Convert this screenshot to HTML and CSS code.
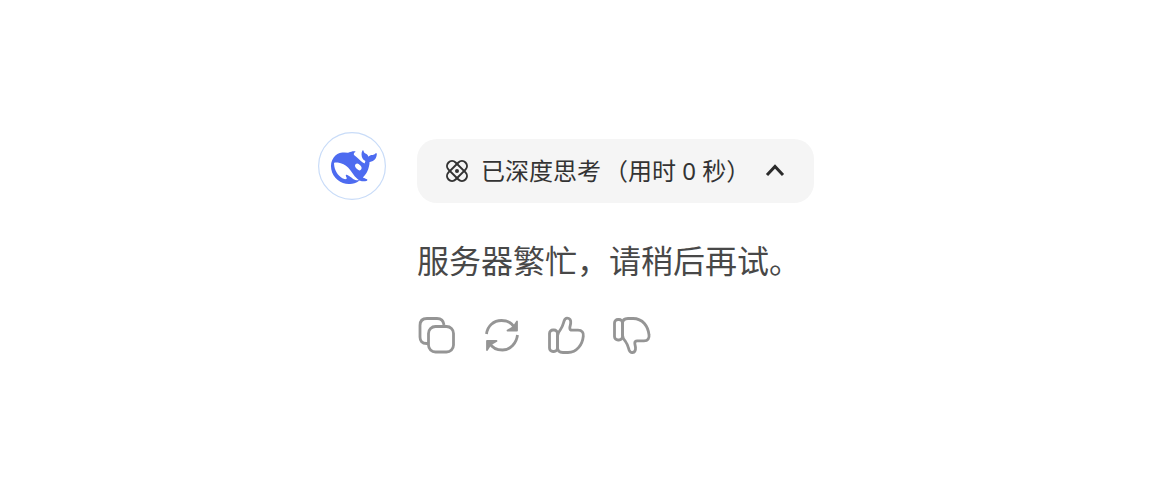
FILE: index.html
```html
<!DOCTYPE html>
<html lang="zh-CN">
<head>
<meta charset="utf-8">
<meta name="viewport" content="width=device-width, initial-scale=1">
<title>对话</title>
<link rel="stylesheet" href="styles.css">
</head>
<body>
<main class="chat">
  <article class="message">
    <svg class="avatar" viewBox="0 0 68 68" role="img" aria-label="DeepSeek">
      <circle cx="34" cy="34" r="33.4" fill="#fff" stroke="#c9dcf8" stroke-width="1.2"/>
      <g transform="translate(13 12.6) scale(1.91)" fill="#4d6bf0">
        <path d="M23.748 4.482c-.254-.124-.364.113-.512.234-.051.039-.094.09-.137.136-.372.397-.806.657-1.373.626-.829-.046-1.537.214-2.163.848-.133-.782-.575-1.248-1.247-1.548-.352-.156-.708-.311-.955-.65-.172-.241-.219-.51-.305-.774-.055-.16-.11-.323-.293-.35-.2-.031-.278.136-.356.276-.313.572-.434 1.202-.422 1.84.027 1.436.633 2.58 1.838 3.393.137.093.172.187.129.323-.082.28-.18.552-.266.833-.055.179-.137.217-.329.14a5.526 5.526 0 01-1.736-1.18c-.857-.828-1.631-1.742-2.597-2.458a11.365 11.365 0 00-.689-.471c-.985-.957.13-1.743.388-1.836.27-.098.093-.432-.779-.428-.872.004-1.67.295-2.687.684a3.055 3.055 0 01-.465.137 9.597 9.597 0 00-2.883-.102c-1.885.21-3.39 1.102-4.497 2.623C.082 8.606-.231 10.684.152 12.85c.403 2.284 1.569 4.175 3.36 5.653 1.858 1.533 3.997 2.284 6.438 2.14 1.482-.085 3.133-.284 4.994-1.86.47.234.962.327 1.78.397.63.059 1.236-.03 1.705-.128.735-.156.684-.837.419-.961-2.155-1.004-1.682-.595-2.113-.926 1.096-1.296 2.746-2.642 3.392-7.003.05-.347.007-.565 0-.845-.004-.17.035-.237.23-.256a4.173 4.173 0 001.545-.475c1.396-.763 1.96-2.015 2.093-3.517.02-.23-.004-.467-.247-.588zM11.581 18c-2.089-1.642-3.102-2.183-3.52-2.16-.392.024-.321.471-.235.763.09.288.207.486.371.739.114.167.192.416-.113.603-.673.416-1.842-.14-1.897-.167-1.361-.802-2.5-1.86-3.301-3.307-.774-1.393-1.224-2.887-1.298-4.482-.02-.386.093-.522.477-.592a4.696 4.696 0 011.529-.039c2.132.312 3.946 1.265 5.468 2.774.868.86 1.525 1.887 2.202 2.891.72 1.066 1.494 2.082 2.48 2.914.348.292.625.514.891.677-.802.09-2.14.11-3.054-.614z"/>
        <ellipse cx="14.300" cy="11.700" rx="2" ry="1.300" transform="rotate(48 14.300 11.700)" fill="#fff"/>
      </g>
    </svg>
    <div class="content">
      <button class="thinking" type="button" aria-expanded="true">
        <svg class="atom" viewBox="0 0 22 22" fill="none" stroke="#333" stroke-width="2" aria-hidden="true">
          <rect x="-1" y="6" width="24" height="10" rx="5" transform="rotate(45 11 11)"/>
          <rect x="-1" y="6" width="24" height="10" rx="5" transform="rotate(-45 11 11)"/>
          <circle cx="11" cy="11" r="2" fill="#333" stroke="none"/>
        </svg>
        <span class="label"><span>已深度思考</span><span>（用时 0 秒）</span></span>
        <svg class="chevron" viewBox="0 0 20 20" fill="none" stroke="#2b2b2b" stroke-width="3" aria-hidden="true">
          <path d="M2 14l8-8.500 8 8.500"/>
        </svg>
      </button>
      <p class="answer">服务器繁忙，请稍后再试。</p>
      <div class="actions">
        <button class="action" type="button" aria-label="复制">
          <svg class="icon" viewBox="0 0 40 40" aria-hidden="true">
            <path d="M11 27.500H9.500C5 27.500 3 25 3 21V9.500C3 5 5.500 2.500 10 2.500h10c4 0 6.500 2 7 6.500"/>
            <rect x="11.500" y="10.500" width="25" height="25.500" rx="7"/>
          </svg>
        </button>
        <button class="action" type="button" aria-label="重新生成">
          <svg class="icon" viewBox="0 0 40 40" aria-hidden="true">
            <path d="M4.500 18C5.500 10 11.500 4.500 19.500 4.500c6 0 10.500 2.500 13 7"/>
            <path d="M35 5.500v9H25.500L31.500 11z" fill="currentColor" stroke-width="1.800"/>
            <path d="M35.500 19c-1 8-7 15-15 15-6 0-10.500-2.500-13-7"/>
            <path d="M5 34v-9h9.500L8.500 28.500z" fill="currentColor" stroke-width="1.800"/>
          </svg>
        </button>
        <button class="action" type="button" aria-label="赞">
          <svg class="icon" viewBox="0 0 40 40" aria-hidden="true">
            <rect x="2.500" y="14" width="8" height="21.500" rx="3.500"/>
            <path d="M10.500 20c0-3 1.300-4.500 3-6.500 2-2.500 2.600-5.500 3.600-8.500.8-2.200 2-3 3.400-2.800 2.500.3 3.500 2.300 3.200 5-.2 2-.9 3-.9 4.700 0 1.600.9 2.300 2.400 2.300H31c4 0 5.800 2.600 5.300 6C35.500 28.500 30 36.500 21 36.500h-5c-3.500 0-5.500-1.500-5.500-5z"/>
          </svg>
        </button>
        <button class="action" type="button" aria-label="踩">
          <svg class="icon" viewBox="0 0 40 40" aria-hidden="true">
            <rect x="2.500" y="3.500" width="8" height="20.500" rx="3.500"/>
            <path d="M10.500 19c0 3 1.300 4.500 3 6.500 2 2.500 2.600 5.500 3.600 8.500.8 2 2 2.700 3.400 2.500 2.500-.3 3.200-2.300 3-5-.2-2-.7-3-.7-4.400 0-1.600.9-2.300 2.400-2.300H32c4 0 5.500-2.600 5-6C36 10.500 31 2.500 21 2.500h-5c-3.500 0-5.500 1.500-5.500 5z"/>
          </svg>
        </button>
      </div>
    </div>
  </article>
</main>
</body>
</html>
```
FILE: styles.css
```css
* {
  box-sizing: border-box;
}

body {
  margin: 0;
  background: #fff;
  color: #484848;
  font-family: "Noto Sans", "Noto Sans CJK SC", sans-serif;
}

.chat {
  max-width: 566px;
  margin: 0 auto;
  padding: 132px 16px 32px;
}

.message {
  display: flex;
  align-items: flex-start;
  gap: 31px;
}

.avatar {
  flex: none;
  width: 68px;
  height: 68px;
}

.content {
  flex: 1;
  min-width: 0;
  padding-top: 7px;
}

.thinking {
  display: inline-flex;
  align-items: center;
  min-height: 64px;
  padding: 0 29px;
  border: 0;
  border-radius: 20px;
  background: #f5f5f5;
  color: #333;
  font: inherit;
  font-size: 24px;
  line-height: 36px;
  cursor: pointer;
}

.atom {
  flex: none;
  width: 22px;
  height: 22px;
  margin-right: 13px;
}

.label {
  display: flex;
  gap: 3px;
}

.chevron {
  flex: none;
  width: 20px;
  height: 20px;
  margin-left: 15px;
}

.answer {
  margin: 34px 0 31px;
  font-size: 32px;
  line-height: 48px;
}

.actions {
  display: flex;
  gap: 25px;
}

.action {
  display: flex;
  padding: 0;
  border: 0;
  background: none;
  color: #959595;
  cursor: pointer;
}

.icon {
  width: 40px;
  height: 40px;
  fill: none;
  stroke: currentColor;
  stroke-width: 2.8px;
  stroke-linejoin: round;
}
```
